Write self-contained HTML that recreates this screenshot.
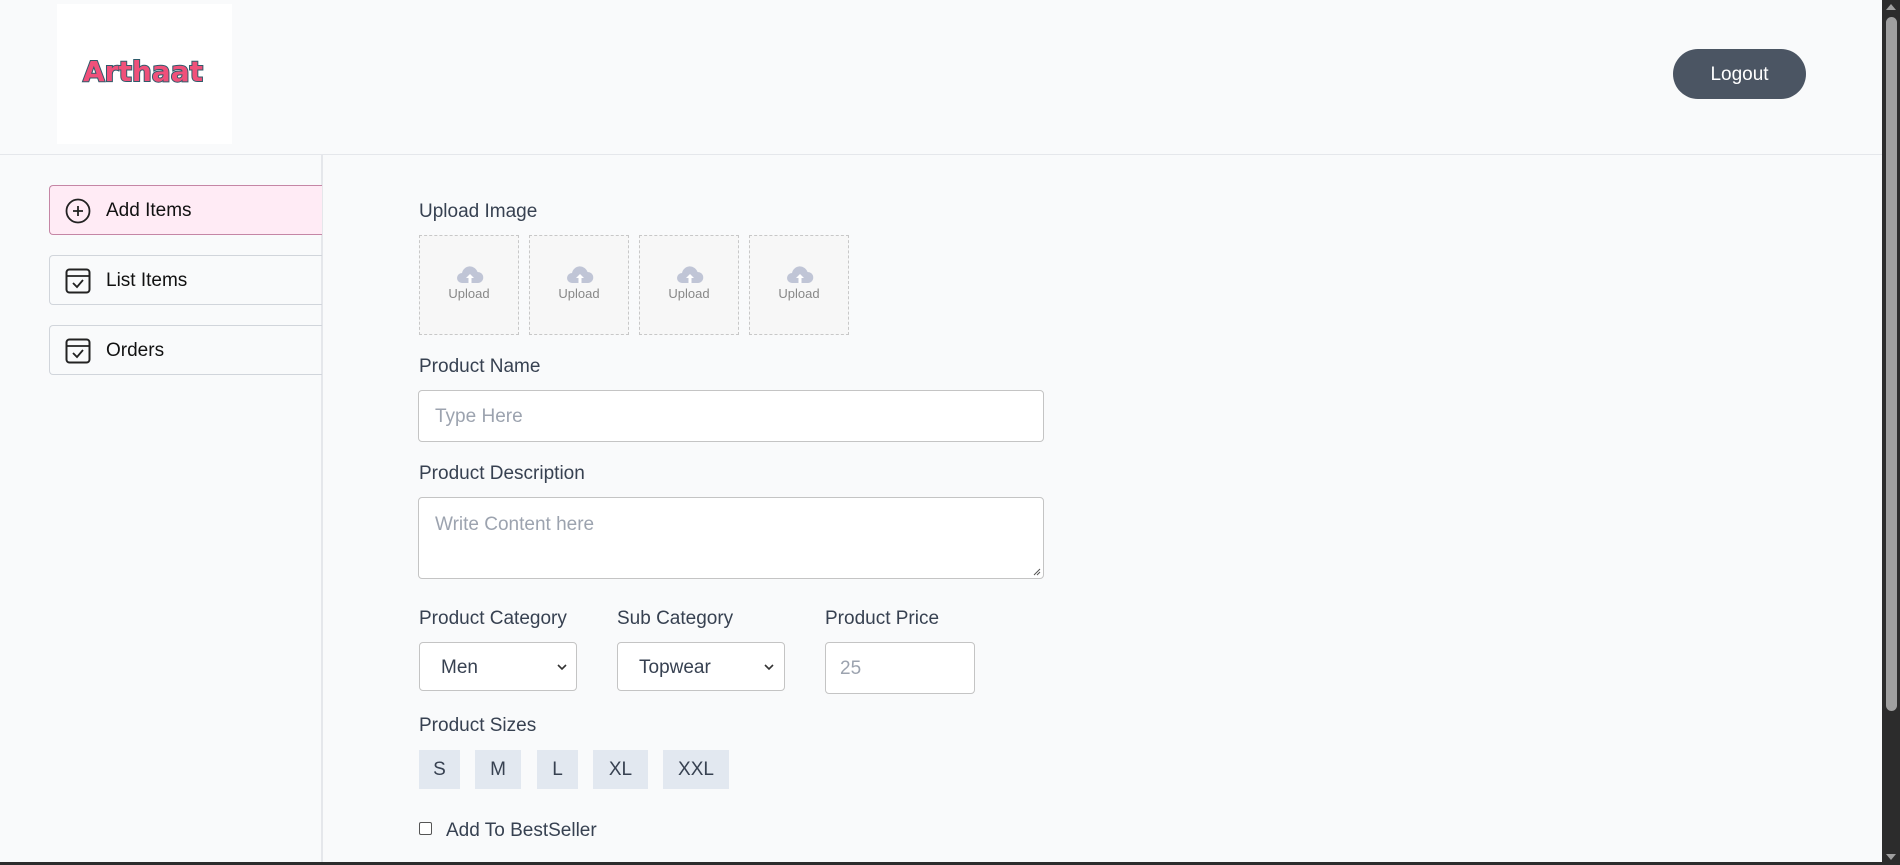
<!DOCTYPE html>
<html><head><meta charset="utf-8"><style>
*{box-sizing:border-box;margin:0;padding:0}
body{width:1900px;height:865px;overflow:hidden;background:#f9fafb;font-family:"Liberation Sans",sans-serif;color:#374151;position:relative}
.a{position:absolute}
.lbl{font-size:19px;color:#374151}
.box{background:#fff;border:1px solid #c4c4c4;border-radius:4px}
.up{border:1.5px dashed #c8c8c8;width:100px;height:100px;background:#f7f7f7;top:235px}
.up svg{position:absolute;left:36px;top:30px}
.up span{position:absolute;top:50px;width:100%;text-align:center;font-size:13px;color:#888}
.nav{left:49px;width:273px;height:50px;border:1px solid #d1d5db;border-right:none;border-radius:4px 0 0 4px;font-size:19px;color:#111}
.nav span{position:absolute;left:56px;top:14px}
.nav svg{position:absolute;left:14px;top:11px}
.sz{top:750px;height:39px;background:#e2e8f0;font-size:19px;text-align:center;line-height:39px;color:#374151}
</style></head><body>
<div class="a" style="left:57px;top:4px;width:175px;height:140px;background:#fff"></div>
<div class="a" style="left:83px;top:55px;font-family:'DejaVu Sans',sans-serif;font-weight:bold;font-size:28px;color:#f0507a;-webkit-text-stroke:2px #2f5b6b;paint-order:stroke fill">Arthaat</div>
<div class="a" style="left:1673px;top:49px;width:133px;height:50px;border-radius:25px;background:#4b5563;color:#fff;font-size:19px;text-align:center;line-height:52px">Logout</div>
<div class="a" style="left:0;top:154px;width:1882px;height:1px;background:#e5e7eb"></div>
<div class="a" style="left:321px;top:155px;width:2px;height:710px;background:#e5e7eb"></div>

<div class="a nav" style="top:185px;background:#ffebf5;border-color:#c586a5"><svg width="28" height="28" viewBox="0 0 28 28"><circle cx="14" cy="14" r="11.5" fill="none" stroke="#222" stroke-width="1.8"/><path d="M14 9v10M9 14h10" stroke="#222" stroke-width="1.8"/></svg><span>Add Items</span></div>
<div class="a nav" style="top:255px"><svg width="28" height="28" viewBox="0 0 28 28"><rect x="2.5" y="2.5" width="23" height="23" rx="3" fill="none" stroke="#222" stroke-width="2"/><path d="M2.5 9h23M9 16l4 4 6-7" fill="none" stroke="#222" stroke-width="1.8"/></svg><span>List Items</span></div>
<div class="a nav" style="top:325px"><svg width="28" height="28" viewBox="0 0 28 28"><rect x="2.5" y="2.5" width="23" height="23" rx="3" fill="none" stroke="#222" stroke-width="2"/><path d="M2.5 9h23M9 16l4 4 6-7" fill="none" stroke="#222" stroke-width="1.8"/></svg><span>Orders</span></div>

<div class="a lbl" style="left:419px;top:201px">Upload Image</div>
<div class="a up" style="left:419px"><svg width="28" height="18" viewBox="0 0 28 18"><path d="M6 17a5 5 0 0 1 0-10 8 8 0 0 1 15.5-1A5.5 5.5 0 0 1 22 17z" fill="#c0c5d6"/><path d="M14 8l-4 4h2.5v5h3v-5H18z" fill="#fff"/></svg><span>Upload</span></div>
<div class="a up" style="left:529px"><svg width="28" height="18" viewBox="0 0 28 18"><path d="M6 17a5 5 0 0 1 0-10 8 8 0 0 1 15.5-1A5.5 5.5 0 0 1 22 17z" fill="#c0c5d6"/><path d="M14 8l-4 4h2.5v5h3v-5H18z" fill="#fff"/></svg><span>Upload</span></div>
<div class="a up" style="left:639px"><svg width="28" height="18" viewBox="0 0 28 18"><path d="M6 17a5 5 0 0 1 0-10 8 8 0 0 1 15.5-1A5.5 5.5 0 0 1 22 17z" fill="#c0c5d6"/><path d="M14 8l-4 4h2.5v5h3v-5H18z" fill="#fff"/></svg><span>Upload</span></div>
<div class="a up" style="left:749px"><svg width="28" height="18" viewBox="0 0 28 18"><path d="M6 17a5 5 0 0 1 0-10 8 8 0 0 1 15.5-1A5.5 5.5 0 0 1 22 17z" fill="#c0c5d6"/><path d="M14 8l-4 4h2.5v5h3v-5H18z" fill="#fff"/></svg><span>Upload</span></div>

<div class="a lbl" style="left:419px;top:356px">Product Name</div>
<div class="a box" style="left:418px;top:390px;width:626px;height:52px"><span class="a" style="left:16px;top:15px;font-size:19px;color:#9ca3af">Type Here</span></div>
<div class="a lbl" style="left:419px;top:463px">Product Description</div>
<div class="a box" style="left:418px;top:497px;width:626px;height:82px"><span class="a" style="left:16px;top:16px;font-size:19px;color:#9ca3af">Write Content here</span><svg class="a" style="right:2px;bottom:2px" width="9" height="9"><path d="M8 2L2 8M8 5L5 8" stroke="#555" stroke-width="1"/></svg></div>

<div class="a lbl" style="left:419px;top:608px">Product Category</div>
<div class="a lbl" style="left:617px;top:608px">Sub Category</div>
<div class="a lbl" style="left:825px;top:608px">Product Price</div>
<div class="a box" style="left:419px;top:642px;width:158px;height:49px"><span class="a" style="left:21px;top:14px;font-size:19px">Men</span><svg class="a" style="left:137px;top:20px" width="10" height="8"><path d="M1 2l4 4 4-4" fill="none" stroke="#333" stroke-width="1.6"/></svg></div>
<div class="a box" style="left:617px;top:642px;width:168px;height:49px"><span class="a" style="left:21px;top:14px;font-size:19px">Topwear</span><svg class="a" style="left:146px;top:20px" width="10" height="8"><path d="M1 2l4 4 4-4" fill="none" stroke="#333" stroke-width="1.6"/></svg></div>
<div class="a box" style="left:825px;top:642px;width:150px;height:52px"><span class="a" style="left:14px;top:15px;font-size:19px;color:#9ca3af">25</span></div>

<div class="a lbl" style="left:419px;top:715px">Product Sizes</div>
<div class="a sz" style="left:419px;width:41px">S</div>
<div class="a sz" style="left:475px;width:46px">M</div>
<div class="a sz" style="left:537px;width:41px">L</div>
<div class="a sz" style="left:593px;width:55px">XL</div>
<div class="a sz" style="left:663px;width:66px">XXL</div>

<div class="a" style="left:419px;top:822px;width:13px;height:13px;border:1.5px solid #555;border-radius:2px;background:#fff"></div>
<div class="a lbl" style="left:446px;top:820px">Add To BestSeller</div>

<div class="a" style="left:1882px;top:0;width:18px;height:865px;background:#2c2c2c"></div>
<div class="a" style="left:1886px;top:17px;width:11px;height:694px;background:#9f9f9f;border-radius:6px"></div>
<svg class="a" style="left:1884px;top:2px" width="14" height="10"><path d="M2 8L7 2 12 8z" fill="#9f9f9f"/></svg>
<svg class="a" style="left:1884px;top:852px" width="14" height="10"><path d="M2 2L7 8 12 2z" fill="#9f9f9f"/></svg>
<div class="a" style="left:0;top:862px;width:1882px;height:3px;background:#2c2c2c"></div>
</body></html>
